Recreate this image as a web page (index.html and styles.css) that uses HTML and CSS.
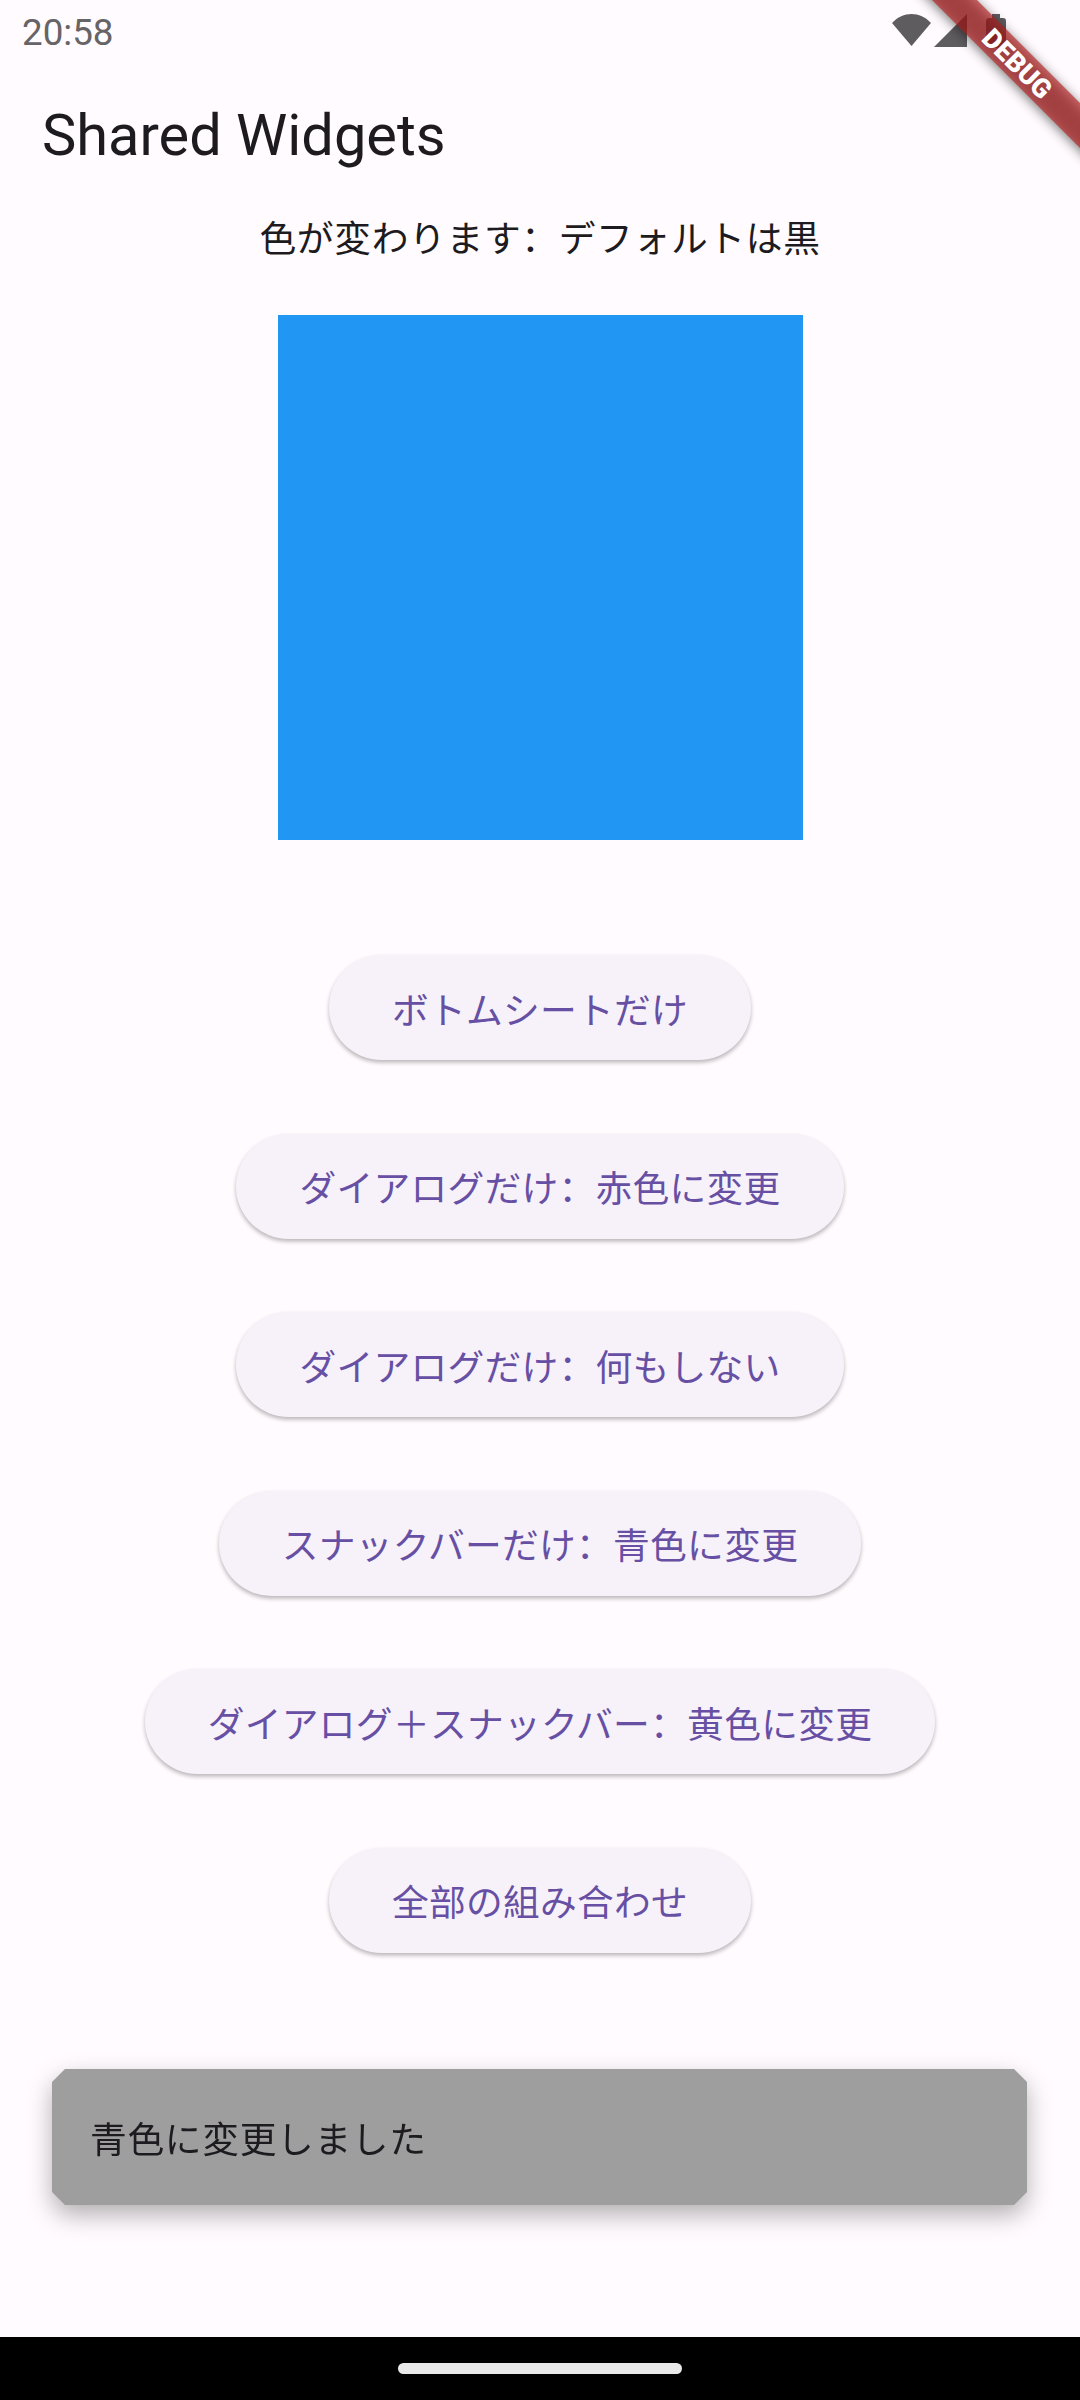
FILE: index.html
```html
<!DOCTYPE html>
<html>
<head>
  <meta charset="UTF-8" />
  <meta name="viewport" content="width=device-width, initial-scale=1.0"/>
  <title>Shared Widgets</title>
  <link rel="stylesheet" href="styles.css">
</head>
<body>
  <div class="status-bar">
    <span class="time">20:58</span>
    <div class="status-icons">
      <svg class="icon-wifi" width="39" height="32" viewBox="0 0 39 32"><path d="M0 9 C11 -3 28 -3 39 9 L19.5 32 Z"/></svg>
      <svg class="icon-cell" width="33" height="33" viewBox="0 0 33 33"><path d="M0 33 L33 0 V33 Z"/></svg>
      <svg class="icon-battery" width="20" height="34" viewBox="0 0 20 34"><path d="M6 0 H14 V4 H17 Q20 4 20 7 V31 Q20 34 17 34 H3 Q0 34 0 31 V7 Q0 4 3 4 H6 Z"/></svg>
    </div>
  </div>

  <header class="app-bar">
    <h1>Shared Widgets</h1>
  </header>

  <main class="content">
    <p class="caption">色が変わります：デフォルトは黒</p>
    <div class="color-box"></div>
    <div class="buttons">
      <button type="button">ボトムシートだけ</button>
      <button type="button">ダイアログだけ：赤色に変更</button>
      <button type="button">ダイアログだけ：何もしない</button>
      <button type="button">スナックバーだけ：青色に変更</button>
      <button type="button">ダイアログ＋スナックバー：黄色に変更</button>
      <button type="button">全部の組み合わせ</button>
    </div>
  </main>

  <div class="snackbar-wrap">
    <div class="snackbar">青色に変更しました</div>
  </div>

  <div class="nav-bar"><div class="nav-handle"></div></div>

  <svg class="debug-ribbon" width="260" height="260" viewBox="0 0 260 260">
    <defs>
      <filter id="ribbon-blur" x="-20%" y="-20%" width="140%" height="140%">
        <feGaussianBlur stdDeviation="6"/>
      </filter>
    </defs>
    <polygon class="ribbon-shadow" points="72,-40 117,-40 300,143 300,188" filter="url(#ribbon-blur)" transform="translate(0 3)"/>
    <polygon class="ribbon-band" points="112,0 157,0 260,103 260,148"/>
    <text class="ribbon-text" transform="translate(197 64) rotate(45)" text-anchor="middle" dominant-baseline="central">DEBUG</text>
  </svg>
</body>
</html>
```

FILE: styles.css
```css
html, body {
  margin: 0;
  padding: 0;
}

body {
  position: relative;
  width: 1080px;
  height: 2400px;
  overflow: hidden;
  display: flex;
  flex-direction: column;
  background: #fffbfe;
  color: #1d1b20;
  font-family: Roboto, "Noto Sans CJK SC", sans-serif;
}

.status-bar {
  height: 63px;
  flex: none;
  position: relative;
  display: flex;
  justify-content: space-between;
  padding: 0 74px 0 22px;
  box-sizing: border-box;
}

.time {
  font-size: 36.75px;
  line-height: 66px;
  color: #666466;
}

.status-icons {
  display: flex;
  align-items: flex-start;
  padding-top: 14px;
}

.status-icons svg {
  fill: #5f5c5f;
  display: block;
}

.icon-cell {
  margin-left: 3px;
}

.icon-battery {
  margin-left: 19px;
}

.app-bar {
  height: 147px;
  flex: none;
  display: flex;
  align-items: center;
  padding: 0 0 2px 42px;
  box-sizing: border-box;
}

.app-bar h1 {
  margin: 0;
  font-size: 57.75px;
  font-weight: 400;
  line-height: 1;
}

.content {
  flex: 1;
  display: flex;
  flex-direction: column;
  align-items: center;
}

.caption {
  margin: 0;
  padding-top: 4px;
  height: 48.5px;
  font-size: 36.75px;
  line-height: 52.5px;
  letter-spacing: 0.66px;
}

.color-box {
  width: 525px;
  height: 525px;
  margin-top: 52.5px;
  background: #2196f3;
}

.buttons {
  margin-top: 115px;
  display: flex;
  flex-direction: column;
  align-items: center;
  gap: 73.5px;
}

button {
  height: 105px;
  padding: 0 63px;
  border: none;
  border-radius: 53px;
  background: #f7f2fa;
  color: #6750a4;
  font-family: inherit;
  font-size: 36.75px;
  letter-spacing: 0.26px;
  box-shadow: 0 2.6px 4px rgba(0, 0, 0, 0.28);
}

.snackbar-wrap {
  flex: none;
  margin: 0 53px 132px 52px;
  filter: drop-shadow(0 10px 12px rgba(0, 0, 0, 0.3));
}

.snackbar {
  height: 136px;
  padding-left: 38px;
  display: flex;
  align-items: center;
  background: #9e9e9e;
  font-size: 36.75px;
  letter-spacing: 0.66px;
  clip-path: polygon(13px 0, calc(100% - 13px) 0, 100% 13px, 100% calc(100% - 13px), calc(100% - 13px) 100%, 13px 100%, 0 calc(100% - 13px), 0 13px);
}

.nav-bar {
  height: 63px;
  flex: none;
  background: #000;
  display: flex;
  justify-content: center;
  padding-top: 26px;
  box-sizing: border-box;
}

.nav-handle {
  width: 284px;
  height: 11px;
  border-radius: 6px;
  background: #e9e9e9;
}

/* flutter debug ribbon, sits over the status icons */
.debug-ribbon {
  position: absolute;
  top: 0;
  right: 0;
}

.ribbon-shadow {
  fill: rgba(0, 0, 0, 0.5);
}

.ribbon-band {
  fill: rgba(183, 28, 28, 0.627);
}

.ribbon-text {
  fill: #fff;
  font-size: 26.8px;
  font-weight: 900;
}
```
